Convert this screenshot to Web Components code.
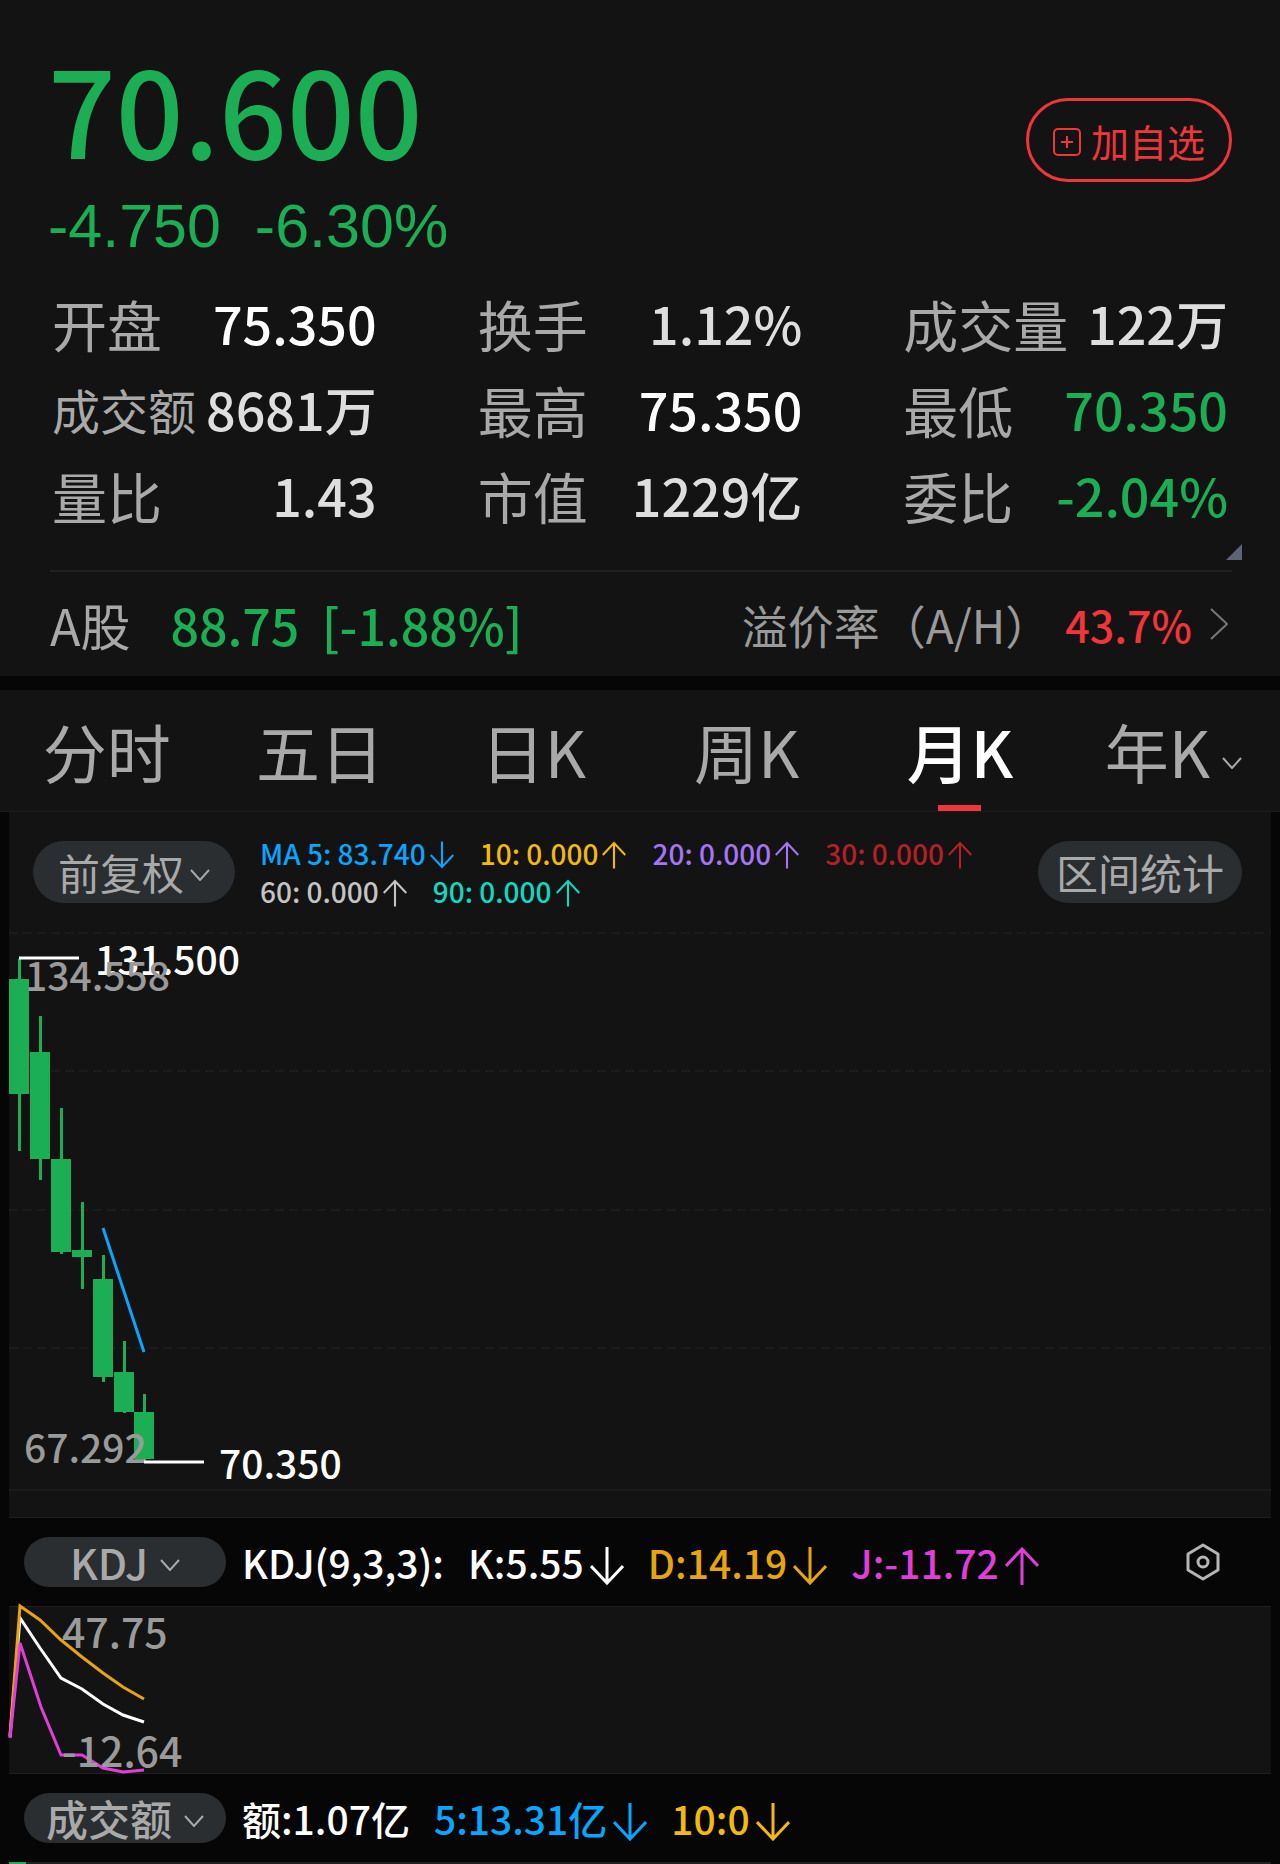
<!DOCTYPE html>
<html lang="zh-CN">
<head>
<meta charset="utf-8">
<meta name="viewport" content="width=device-width, initial-scale=1">
<title>70.600 -6.30%</title>
<style>
  :root {
    --up: #f0353b;
    --down: #1cae54;
    --panel: #131313;
    --line: #202020;
    --pill: #2a2e31;
    --muted: #a9a9a9;
    --ma5: #09a5ff;
    --ma10: #f2b90f;
    --d: #e6a50f;
    --j: #df3fd8;
  }

  body {
    margin: 0;
    background: #060606;
    color: #fff;
    font-family: "Noto Sans CJK SC", sans-serif;
  }
</style>
</head>
<body>
<stock-page></stock-page>

<script>
const CHEVRON = `
  <svg class="chevron" width="20" height="12" viewBox="0 0 20 12" fill="none" stroke="currentColor" stroke-width="2" aria-hidden="true">
    <path d="M1 1l9 10 9-10"/>
  </svg>
`;

class QuotePrice extends HTMLElement {
  constructor() {
    super();
    this.attachShadow({ mode: "open" });
  }

  get styles() {
    return `
      :host {
        display: flex;
        justify-content: space-between;
        align-items: center;
        padding: 42px 48px 0;
        color: var(--down);
      }

      .price {
        font-size: 119px;
        font-weight: 500;
        line-height: 130px;
      }

      .change {
        font-family: "Liberation Sans", sans-serif;
        font-size: 61px;
        line-height: 108px;
        white-space: pre;
      }

      button {
        display: flex;
        align-items: center;
        gap: 10px;
        height: 84px;
        margin: 0 0 42px;
        padding: 0 24px;
        border: 3px solid var(--up);
        border-radius: 42px;
        background: none;
        color: var(--up);
        font: inherit;
        font-size: 38px;
      }

      button svg { margin-top: 4px; }
    `;
  }

  connectedCallback() {
    this.shadowRoot.innerHTML = `
      <style>${this.styles}</style>
      <div>
        <div class="price">${this.getAttribute("price")}</div>
        <div class="change">${this.getAttribute("change")}  ${this.getAttribute("percent")}</div>
      </div>
      <button type="button">
        <svg width="28" height="28" viewBox="0 0 28 28" fill="none" stroke="currentColor" stroke-width="2" aria-hidden="true">
          <rect x="1" y="1" width="26" height="26" rx="4"/>
          <path d="M14 8v12M8 14h12"/>
        </svg>
        <slot></slot>
      </button>
    `;
  }
}

class QuoteStat extends HTMLElement {
  constructor() {
    super();
    this.attachShadow({ mode: "open" });
  }

  get styles() {
    return `
      :host {
        display: flex;
        justify-content: space-between;
        align-items: center;
        font-size: 52px;
        line-height: 86px;
        white-space: nowrap;
        color: #dedede;
      }

      :host([tone="flat"]) { color: #fff; }
      :host([tone="down"]) { color: var(--down); }

      .label {
        color: var(--muted);
        font-size: 55px;
      }

      :host([compact]) .label { font-size: 48px; }

      .value { font-weight: 500; }
    `;
  }

  connectedCallback() {
    this.shadowRoot.innerHTML = `
      <style>${this.styles}</style>
      <span class="label">${this.getAttribute("label")}</span>
      <span class="value"><slot></slot></span>
    `;
  }
}

class QuoteStats extends HTMLElement {
  constructor() {
    super();
    this.attachShadow({ mode: "open" });
  }

  connectedCallback() {
    this.shadowRoot.innerHTML = `
      <style>
        :host {
          display: grid;
          grid-template-columns: repeat(3, 1fr);
          column-gap: 101px;
          position: relative;
          padding: 0 52px 32px;
        }

        .more {
          position: absolute;
          right: 38px;
          bottom: 10px;
        }
      </style>
      <slot></slot>
      <svg class="more" width="16" height="16" viewBox="0 0 16 16" aria-hidden="true"><path d="M16 0v16H0z" fill="#5e6476"/></svg>
    `;
  }
}

class AShareLink extends HTMLElement {
  constructor() {
    super();
    this.attachShadow({ mode: "open" });
  }

  get styles() {
    return `
      :host {
        display: block;
        padding: 0 48px 0 50px;
      }

      a {
        display: flex;
        align-items: center;
        border-top: 2px solid var(--line);
        line-height: 104px;
        font-size: 50px;
        font-weight: 500;
        color: var(--muted);
        text-decoration: none;
        white-space: pre;
      }

      .quote {
        margin-left: 40px;
        color: var(--down);
      }

      .premium {
        margin: 0 14px 0 auto;
        font-size: 46px;
        font-weight: 400;
        color: #9a9a9a;
      }

      .rate {
        font-size: 43px;
        color: var(--up);
      }

      .name { font-weight: 400; }

      svg { margin: 0 4px 0 18px; }
    `;
  }

  connectedCallback() {
    this.shadowRoot.innerHTML = `
      <style>${this.styles}</style>
      <a href="#a-share">
        <span class="name">A股</span>
        <span class="quote">88.75  [-1.88%]</span>
        <span class="premium">溢价率（A/H）</span>
        <span class="rate">43.7%</span>
        <svg width="18" height="32" viewBox="0 0 18 32" fill="none" stroke="#777" stroke-width="2" aria-hidden="true"><path d="M1 1l16 15L1 31"/></svg>
      </a>
    `;
  }
}

class PeriodTabs extends HTMLElement {
  constructor() {
    super();
    this.attachShadow({ mode: "open" });
  }

  get styles() {
    return `
      :host {
        display: grid;
        grid-template-columns: repeat(6, 1fr);
        margin-top: 14px;
        border-bottom: 1px solid #1d1d1d;
        background: var(--panel);
      }

      button {
        display: flex;
        justify-content: center;
        align-items: center;
        gap: 12px;
        position: relative;
        padding: 0;
        border: 0;
        background: none;
        color: var(--muted);
        font: inherit;
        font-size: 64px;
        line-height: 121px;
        white-space: nowrap;
      }

      button[aria-selected="true"] {
        color: #fff;
        font-weight: 500;
      }

      button[aria-selected="true"]::after {
        content: "";
        position: absolute;
        bottom: 0;
        width: 43px;
        height: 6px;
        background: var(--up);
      }

      .chevron { margin-top: 24px; }
    `;
  }

  connectedCallback() {
    const tabs = this.getAttribute("tabs").split(",");
    const active = this.getAttribute("active");
    this.shadowRoot.innerHTML = `
      <style>${this.styles}</style>
      ${tabs.map((tab, i) => `
        <button type="button" role="tab" aria-selected="${tab === active}">${tab}${i === tabs.length - 1 ? CHEVRON : ""}</button>
      `).join("")}
    `;
    this.setAttribute("role", "tablist");
  }
}

class PillButton extends HTMLElement {
  constructor() {
    super();
    this.attachShadow({ mode: "open" });
  }

  get styles() {
    return `
      :host {
        display: block;
        flex: none;
      }

      button {
        display: flex;
        justify-content: center;
        align-items: center;
        gap: 6px;
        min-width: 202px;
        height: 62px;
        padding: 0 18px;
        border: 0;
        border-radius: 31px;
        background: var(--pill);
        color: var(--muted);
        font: inherit;
        font-size: 42px;
        line-height: 50px;
        white-space: nowrap;
      }

      :host([small]) button {
        height: 50px;
        gap: 12px;
      }

      .chevron { margin-top: 6px; }
    `;
  }

  connectedCallback() {
    this.shadowRoot.innerHTML = `
      <style>${this.styles}</style>
      <button type="button"><slot></slot>${this.hasAttribute("menu") ? CHEVRON : ""}</button>
    `;
  }
}

// Indicator reading followed by its trend arrow
class TrendValue extends HTMLElement {
  constructor() {
    super();
    this.attachShadow({ mode: "open" });
  }

  get styles() {
    return `
      :host {
        display: flex;
        align-items: center;
        gap: 4px;
        font-weight: 500;
        white-space: nowrap;
      }

      svg {
        width: 24px;
        height: 28px;
        margin-top: 4px;
      }

      :host([large]) { gap: 6px; }

      :host([large]) svg {
        width: 34px;
        height: 38px;
        margin-top: 8px;
      }
    `;
  }

  connectedCallback() {
    const trend = this.getAttribute("trend");
    const path = trend === "down" ? "M17 0v36M1 19l16 17 16-17" : "M17 38V2M1 19L17 2l16 17";
    this.shadowRoot.innerHTML = `
      <style>${this.styles}</style>
      <slot></slot>
      ${trend ? `<svg viewBox="0 0 34 38" fill="none" stroke="currentColor" stroke-width="3" aria-hidden="true"><path d="${path}"/></svg>` : ""}
    `;
  }
}

class ChartToolbar extends HTMLElement {
  constructor() {
    super();
    this.attachShadow({ mode: "open" });
  }

  connectedCallback() {
    this.shadowRoot.innerHTML = `
      <style>
        :host {
          display: flex;
          align-items: center;
          gap: 25px;
          min-height: 120px;
          padding: 0 29px 0 24px;
        }

        .averages {
          display: flex;
          flex: 1;
          flex-wrap: wrap;
          column-gap: 26px;
          font-size: 28px;
          line-height: 38px;
        }
      </style>
      <slot name="left"></slot>
      <div class="averages"><slot></slot></div>
      <slot name="right"></slot>
    `;
  }
}

class IndicatorBar extends HTMLElement {
  constructor() {
    super();
    this.attachShadow({ mode: "open" });
  }

  get styles() {
    return `
      :host {
        display: flex;
        align-items: center;
        gap: 16px;
        height: 88px;
        padding: 0 60px 0 24px;
        font-size: 39px;
        font-weight: 500;
        white-space: nowrap;
      }

      .values {
        display: flex;
        flex: 1;
        gap: 24px;
      }

      .settings {
        padding: 0;
        border: 0;
        background: none;
        color: #b5b5b5;
        line-height: 0;
      }
    `;
  }

  connectedCallback() {
    this.shadowRoot.innerHTML = `
      <style>${this.styles}</style>
      <slot name="menu"></slot>
      <div class="values"><slot></slot></div>
      ${this.hasAttribute("settings") ? `
        <button class="settings" type="button" aria-label="设置">
          <svg width="34" height="38" viewBox="0 0 34 38" fill="none" stroke="currentColor" stroke-width="3" stroke-linejoin="round">
            <path d="M17 2l15 9v16l-15 9-15-9V11z"/>
            <circle cx="17" cy="19" r="5"/>
          </svg>
        </button>
      ` : ""}
    `;
  }
}

// [centre x, open y, close y, high y, low y]
const CANDLES = [
  [10, 47, 162, 27, 219],
  [31, 120, 227, 84, 248],
  [52, 227, 320, 176, 322],
  [73, 318, 325, 270, 357],
  [94, 347, 445, 323, 450],
  [115, 440, 480, 409, 481],
  [135, 480, 527, 462, 530]
];

class KlineChart extends HTMLElement {
  constructor() {
    super();
    this.attachShadow({ mode: "open" });
  }

  get styles() {
    return `
      :host {
        display: block;
        height: 585px;
        border-bottom: 1px solid var(--line);
      }

      svg {
        display: block;
        width: 100%;
        height: 100%;
        overflow: visible;
      }

      text {
        font-size: 39px;
        font-weight: 500;
        fill: #fff;
      }

      .axis { fill: #9a9a9a; }
      .grid { stroke: #1b1b1b; stroke-width: 2; }
      .dashed { stroke-dasharray: 9 5; }
      .mark { stroke: #fff; stroke-width: 3; }
      .candle { fill: var(--down); }
    `;
  }

  connectedCallback() {
    this.shadowRoot.innerHTML = `
      <style>${this.styles}</style>
      <svg role="img" aria-label="月K">
        ${[1, 139, 278, 416].map((y) => `<line class="grid dashed" x1="0" x2="100%" y1="${y}" y2="${y}"/>`).join("")}
        <line class="grid" x1="0" x2="100%" y1="558" y2="558"/>
        ${CANDLES.map(([x, open, close, high, low]) => `
          <g class="candle">
            <rect x="${x - 1}" y="${high}" width="3" height="${low - high}"/>
            <rect x="${x - 10}" y="${open}" width="20" height="${close - open}"/>
          </g>
        `).join("")}
        <path d="M94 296L135 420" fill="none" stroke="var(--ma5)" stroke-width="3"/>
        <line class="mark" x1="10" x2="70" y1="26" y2="26"/>
        <text x="86" y="43">131.500</text>
        <text class="axis" x="16" y="59">134.558</text>
        <text class="axis" x="15" y="531">67.292</text>
        <line class="mark" x1="135" x2="195" y1="530" y2="530"/>
        <text x="210" y="547">70.350</text>
      </svg>
    `;
  }
}

class KdjChart extends HTMLElement {
  constructor() {
    super();
    this.attachShadow({ mode: "open" });
  }

  get styles() {
    return `
      :host {
        display: block;
        height: 166px;
        border: solid var(--line);
        border-width: 1px 0;
      }

      svg {
        display: block;
        width: 100%;
        height: 100%;
        overflow: visible;
      }

      text {
        font-size: 41px;
        font-weight: 500;
        fill: #9a9a9a;
      }

      polyline {
        fill: none;
        stroke-width: 3;
      }
    `;
  }

  connectedCallback() {
    this.shadowRoot.innerHTML = `
      <style>${this.styles}</style>
      <svg role="img" aria-label="KDJ">
        <polyline stroke="#fff" points="1,130 11,11 31,41 52,71 73,82 94,97 114,108 135,115"/>
        <polyline stroke="var(--d)" points="1,128 11,-1 31,13 52,33 73,50 94,66 114,80 135,92"/>
        <polyline stroke="var(--j)" points="1,131 11,36 32,100 52,148 73,148 94,161 114,165 135,163"/>
        <text x="53" y="41">47.75</text>
        <text x="53" y="160">-12.64</text>
      </svg>
    `;
  }
}

class StockPage extends HTMLElement {
  constructor() {
    super();
    this.attachShadow({ mode: "open" });
  }

  get styles() {
    return `
      :host { display: block; }

      .summary { background: var(--panel); }

      .charts { margin: 0 9px; }

      .panel { background: var(--panel); }

      .white { color: #fff; }
      .ma5 { color: var(--ma5); }
      .ma10 { color: var(--ma10); }
      .ma20 { color: #a575f5; }
      .ma30 { color: #b3202a; }
      .ma60 { color: #c4c4c4; }
      .ma90 { color: #12d8c0; }
      .d { color: var(--d); }
      .j { color: var(--j); }

      indicator-bar {
        margin: 0 -9px;
      }

      .volume {
        height: 2px;
        background: linear-gradient(to right, var(--down) 17px, var(--line) 17px);
      }
    `;
  }

  connectedCallback() {
    this.shadowRoot.innerHTML = `
      <style>${this.styles}</style>
      <section class="summary">
        <quote-price price="70.600" change="-4.750" percent="-6.30%">加自选</quote-price>
        <quote-stats>
          <quote-stat label="开盘" tone="flat">75.350</quote-stat>
          <quote-stat label="换手">1.12%</quote-stat>
          <quote-stat label="成交量">122万</quote-stat>
          <quote-stat label="成交额" compact>8681万</quote-stat>
          <quote-stat label="最高" tone="flat">75.350</quote-stat>
          <quote-stat label="最低" tone="down">70.350</quote-stat>
          <quote-stat label="量比">1.43</quote-stat>
          <quote-stat label="市值">1229亿</quote-stat>
          <quote-stat label="委比" tone="down">-2.04%</quote-stat>
        </quote-stats>
        <a-share-link></a-share-link>
      </section>
      <period-tabs tabs="分时,五日,日K,周K,月K,年K" active="月K"></period-tabs>
      <main class="charts">
        <section class="panel">
          <chart-toolbar>
            <pill-button slot="left" menu>前复权</pill-button>
            <trend-value class="ma5" trend="down">MA 5: 83.740</trend-value>
            <trend-value class="ma10" trend="up">10: 0.000</trend-value>
            <trend-value class="ma20" trend="up">20: 0.000</trend-value>
            <trend-value class="ma30" trend="up">30: 0.000</trend-value>
            <trend-value class="ma60" trend="up">60: 0.000</trend-value>
            <trend-value class="ma90" trend="up">90: 0.000</trend-value>
            <pill-button slot="right">区间统计</pill-button>
          </chart-toolbar>
          <kline-chart></kline-chart>
        </section>
        <indicator-bar settings>
          <pill-button slot="menu" small menu>KDJ</pill-button>
          <trend-value large>KDJ(9,3,3):</trend-value>
          <trend-value class="white" large trend="down">K:5.55</trend-value>
          <trend-value class="d" large trend="down">D:14.19</trend-value>
          <trend-value class="j" large trend="up">J:-11.72</trend-value>
        </indicator-bar>
        <kdj-chart class="panel"></kdj-chart>
        <indicator-bar>
          <pill-button slot="menu" small menu>成交额</pill-button>
          <trend-value large>额:1.07亿</trend-value>
          <trend-value class="ma5" large trend="down">5:13.31亿</trend-value>
          <trend-value class="ma10" large trend="down">10:0</trend-value>
        </indicator-bar>
        <div class="volume"></div>
      </main>
    `;
  }
}

customElements.define("quote-price", QuotePrice);
customElements.define("quote-stat", QuoteStat);
customElements.define("quote-stats", QuoteStats);
customElements.define("a-share-link", AShareLink);
customElements.define("period-tabs", PeriodTabs);
customElements.define("pill-button", PillButton);
customElements.define("trend-value", TrendValue);
customElements.define("chart-toolbar", ChartToolbar);
customElements.define("indicator-bar", IndicatorBar);
customElements.define("kline-chart", KlineChart);
customElements.define("kdj-chart", KdjChart);
customElements.define("stock-page", StockPage);
</script>
</body>
</html>
